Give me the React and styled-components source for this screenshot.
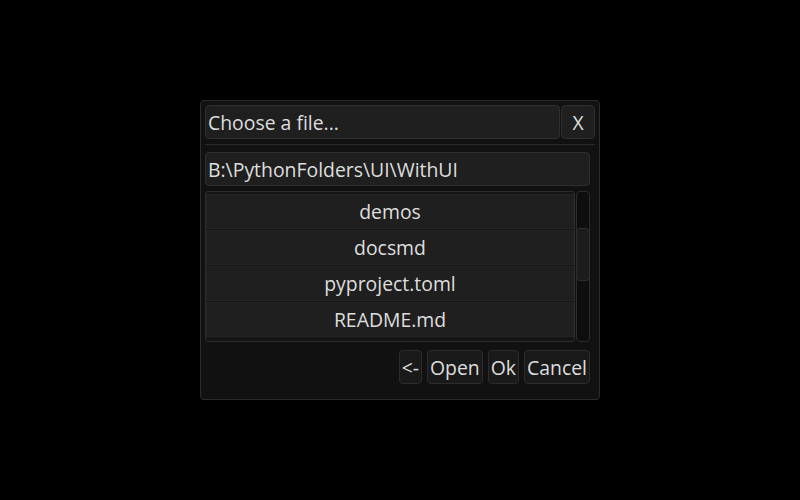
import React from "react";
import styled, { createGlobalStyle } from "styled-components";

const Global = createGlobalStyle`
  html, body {
    margin: 0;
    padding: 0;
    background: #000;
  }
  * { box-sizing: border-box; }
`;

const Screen = styled.div`
  width: 800px;
  height: 500px;
  display: flex;
  align-items: center;
  justify-content: center;
  background: #000;
  font-family: "Open Sans", "Noto Sans", sans-serif;
  font-size: 19.4px;
  color: #dedede;
`;

const Dialog = styled.div`
  width: 400px;
  height: 300px;
  background: #111111;
  border: 1px solid #2c2c2c;
  border-radius: 4px;
  padding: 4px;
  display: flex;
  flex-direction: column;
`;

const TitleRow = styled.div`
  display: flex;
  gap: 1px;
  height: 34px;
`;

const Field = styled.div`
  flex: 1;
  height: 34px;
  background: #1f1f1f;
  border: 1px solid #2f2f2f;
  border-radius: 4px;
  padding: 2px 2px 0;
  display: flex;
  align-items: center;
  white-space: nowrap;
  line-height: 1;
`;

const PathField = styled(Field)`
  flex: none;
`;

const CloseButton = styled.div`
  width: 34px;
  height: 34px;
  background: #1f1f1f;
  border: 1px solid #2f2f2f;
  border-radius: 4px;
  display: flex;
  align-items: center;
  justify-content: center;
`;

const Separator = styled.div`
  height: 1px;
  background: #2a2a2a;
  margin: 5px 0 7px;
`;

const Body = styled.div`
  display: flex;
  flex-direction: column;
  margin-right: 5px;
`;

const ListArea = styled.div`
  display: flex;
  margin-top: 5px;
  height: 151px;
  gap: 1px;
`;

const List = styled.div`
  flex: 1;
  border: 1px solid #2c2c2c;
  border-radius: 3px;
  background: #141414;
  padding-top: 2px;
  display: flex;
  flex-direction: column;
  gap: 1px;
  overflow: hidden;
`;

const Row = styled.div`
  height: 35px;
  flex-shrink: 0;
  background: #1f1f1f;
  border: 1px solid #242424;
  display: flex;
  align-items: center;
  justify-content: center;
`;

const Track = styled.div`
  width: 14px;
  border: 1px solid #2c2c2c;
  border-radius: 4px;
  background: #0e0e0e;
  position: relative;
`;

const Thumb = styled.div`
  position: absolute;
  left: -1px;
  right: -1px;
  top: 36px;
  height: 53px;
  background: #1c1c1c;
  border: 1px solid #2f2f2f;
  border-radius: 4px;
`;

const Actions = styled.div`
  display: flex;
  justify-content: flex-end;
  gap: 5px;
  margin-top: 8px;
`;

const Button = styled.div`
  height: 34px;
  padding: 2px 2px 0;
  background: #1a1a1a;
  border: 1px solid #2c2c2c;
  border-radius: 4px;
  display: flex;
  align-items: center;
  justify-content: center;
  line-height: 1;
`;

const files = ["demos", "docsmd", "pyproject.toml", "README.md"];

export default function App() {
  return (
    <Screen>
      <Global />
      <Dialog>
        <TitleRow>
          <Field>Choose a file...</Field>
          <CloseButton>X</CloseButton>
        </TitleRow>
        <Separator />
        <Body>
          <PathField>B:\PythonFolders\UI\WithUI</PathField>
          <ListArea>
            <List>
              {files.map((f) => (
                <Row key={f}>{f}</Row>
              ))}
            </List>
            <Track>
              <Thumb />
            </Track>
          </ListArea>
          <Actions>
            <Button>&lt;-</Button>
            <Button>Open</Button>
            <Button>Ok</Button>
            <Button>Cancel</Button>
          </Actions>
        </Body>
      </Dialog>
    </Screen>
  );
}
